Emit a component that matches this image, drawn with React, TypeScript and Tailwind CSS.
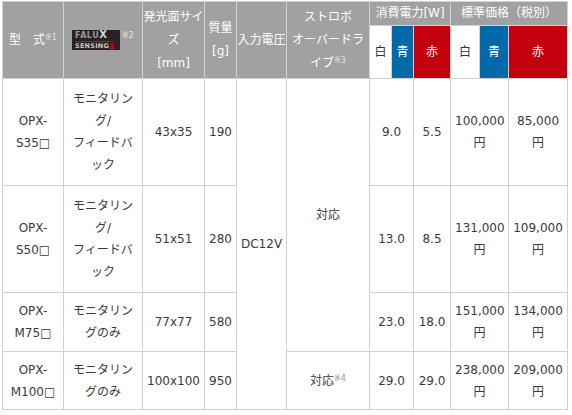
const font = '"DejaVu Sans", "Noto Sans CJK JP", sans-serif';

function FaluxLogo() {
  return (
    <span className="inline-flex items-center align-middle">
      <span className="flex h-[20px] w-[48px] flex-col justify-center bg-[#2a2222] px-[3px] leading-none">
        <span className="flex items-end">
          <span className="text-[8px] font-bold tracking-[0.5px] text-[#9a9a9a]">FALU</span>
          <span className="text-[10px] font-bold text-[#d8d8d8]">X</span>
        </span>
        <span className="mt-[1px] h-px w-[38px] bg-[#c4101a]"></span>
        <span className="mt-[1px] flex items-center gap-[1px]">
          <span className="text-[6.5px] font-bold tracking-[0.2px] text-[#c8c8c8]">SENSING</span>
          <span className="flex flex-col gap-[1px]">
            <span className="h-[1px] w-[4px] bg-[#d0101a]"></span>
            <span className="h-[1px] w-[4px] bg-[#d0101a]"></span>
            <span className="h-[1px] w-[4px] bg-[#d0101a]"></span>
          </span>
        </span>
      </span>
      <sup className="ml-[2px] text-[8px] leading-none text-[#e4e4e4]">※2</sup>
    </span>
  );
}

const rows = [
  { model: "OPX-S35□", fn: ["モニタリング/", "フィードバック"], size: "43x35", weight: "190", pw: ["9.0", "5.5"], price: ["100,000円", "85,000円"], h: "h-[107px]" },
  { model: "OPX-S50□", fn: ["モニタリング/", "フィードバック"], size: "51x51", weight: "280", pw: ["13.0", "8.5"], price: ["131,000円", "109,000円"], h: "h-[107px]" },
  { model: "OPX-M75□", fn: ["モニタリングのみ"], size: "77x77", weight: "580", pw: ["23.0", "18.0"], price: ["151,000円", "134,000円"], h: "h-[59px]" },
  { model: "OPX-M100□", fn: ["モニタリングのみ"], size: "100x100", weight: "950", pw: ["29.0", "29.0"], price: ["238,000円", "209,000円"], h: "h-[58px]" },
];

const cell = "border border-[#d2d2d2] p-0 text-center font-normal leading-[23px]";
const th = `${cell} bg-[#a1a1a1] text-white`;
const thWhite = `${cell} bg-white text-[#333]`;
const thBlue = `${cell} bg-[#0069aa] text-white`;
const thRed = `${cell} bg-[#c3000b] text-white`;
const td = "border border-[#d2d2d2] px-[4px] text-center text-[#3a3a3a] leading-[22px]";
const sup = "text-[8px] leading-none";

export default function App() {
  return (
    <div className="bg-white pl-[2px] pt-[1px]" style={{ fontFamily: font }}>
      <table className="w-[565px] table-fixed border-collapse text-[12px]">
        <colgroup>
          <col className="w-[61px]" />
          <col className="w-[79px]" />
          <col className="w-[62px]" />
          <col className="w-[32px]" />
          <col className="w-[50px]" />
          <col className="w-[83px]" />
          <col className="w-[22px]" />
          <col className="w-[22px]" />
          <col className="w-[37px]" />
          <col className="w-[29px]" />
          <col className="w-[29px]" />
          <col className="w-[59px]" />
        </colgroup>
        <thead>
          <tr className="h-[24px]">
            <th rowSpan={2} className={th}>
              型　式<sup className={`${sup} text-[#e4e4e4]`}>※1</sup>
            </th>
            <th rowSpan={2} className={th}>
              <FaluxLogo />
            </th>
            <th rowSpan={2} className={th}>
              発光面サイズ
              <br />
              [mm]
            </th>
            <th rowSpan={2} className={th}>
              質量
              <br />
              [g]
            </th>
            <th rowSpan={2} className={th}>
              入力電圧
            </th>
            <th rowSpan={2} className={th}>
              ストロボ
              <br />
              オーバードライブ<sup className={`${sup} text-[#e4e4e4]`}>※3</sup>
            </th>
            <th colSpan={3} className={th}>
              消費電力[W]
            </th>
            <th colSpan={3} className={th}>
              標準価格（税別）
            </th>
          </tr>
          <tr className="h-[53px]">
            <th className={thWhite}>白</th>
            <th className={thBlue}>青</th>
            <th className={thRed}>赤</th>
            <th className={thWhite}>白</th>
            <th className={thBlue}>青</th>
            <th className={thRed}>赤</th>
          </tr>
        </thead>
        <tbody>
          {rows.map((r, i) => (
            <tr key={r.model} className={r.h}>
              <td className={td}>{r.model}</td>
              <td className={`${td} px-[5px]`}>
                {r.fn.map((line, j) => (
                  <span key={j}>
                    {j > 0 && <br />}
                    {line}
                  </span>
                ))}
              </td>
              <td className={td}>{r.size}</td>
              <td className={`${td} px-[2px]`}>{r.weight}</td>
              {i === 0 && (
                <td rowSpan={4} className={td}>
                  DC12V
                </td>
              )}
              {i === 0 && (
                <td rowSpan={3} className={td}>
                  対応
                </td>
              )}
              {i === 3 && (
                <td className={td}>
                  対応<sup className={`${sup} text-[#999]`}>※4</sup>
                </td>
              )}
              <td colSpan={2} className={td}>
                {r.pw[0]}
              </td>
              <td className={td}>{r.pw[1]}</td>
              <td colSpan={2} className={td}>
                {r.price[0]}
              </td>
              <td className={td}>{r.price[1]}</td>
            </tr>
          ))}
        </tbody>
      </table>
    </div>
  );
}
